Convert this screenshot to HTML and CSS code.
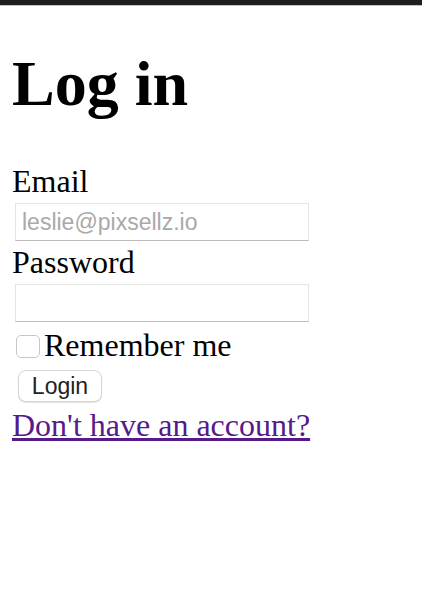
FILE: index.html
```html
<!DOCTYPE html>
<html>
<head>
<meta charset="utf-8">
<title>Log in</title>
<link rel="stylesheet" href="styles.css">
</head>
<body>
<div class="topbar"></div>
<main class="page">
  <h1 class="title">Log in</h1>
  <form class="login-form">
    <label class="field-label" for="email">Email</label>
    <input class="text-input" id="email" type="email" placeholder="leslie@pixsellz.io">
    <label class="field-label" for="password">Password</label>
    <input class="text-input" id="password" type="password">
    <label class="remember">
      <span class="checkbox"></span>
      <span class="remember-text">Remember me</span>
    </label>
    <button class="login-btn" type="button">Login</button>
  </form>
  <a class="signup-link" href="#">Don't have an account?</a>
</main>
</body>
</html>
```

FILE: styles.css
```css
html, body {
  margin: 0;
  padding: 0;
  background: #ffffff;
}
body {
  font-family: "Liberation Serif", "Times New Roman", serif;
  color: #000;
}
.topbar {
  height: 5px;
  background: #1e1e1e;
  border-bottom: 1px solid #c4c4c4;
}
.page {
  padding: 0 12px;
}
.title {
  margin: 42px 0 46px 0;
  font-size: 64px;
  font-weight: bold;
  line-height: 71px;
}
.login-form {
  display: flex;
  flex-direction: column;
  align-items: flex-start;
}
.field-label {
  display: block;
  font-size: 32px;
  line-height: 33px;
}
.text-input {
  display: block;
  box-sizing: border-box;
  width: 294px;
  height: 38px;
  margin: 5px 0 5px 3px;
  padding: 0 6px;
  border: 1px solid #e4e4e4;
  border-bottom-color: #bcbcbc;
  border-radius: 0;
  background: #fff;
  font-family: "Liberation Sans", Arial, sans-serif;
  font-size: 23px;
  outline: none;
}
.text-input::placeholder {
  color: #a9a9a9;
}
.remember {
  display: flex;
  align-items: center;
  margin-top: 2px;
  height: 33px;
}
.checkbox {
  box-sizing: border-box;
  width: 24px;
  height: 23px;
  margin: 2px 4px 0 4px;
  border: 1px solid #c6c6c6;
  border-radius: 5px;
  background: #fff;
}
.remember-text {
  font-size: 32px;
  line-height: 33px;
}
.login-btn {
  box-sizing: border-box;
  margin: 8px 0 0 6px;
  width: 84px;
  height: 32px;
  padding: 0;
  border: 1px solid #d6d6d6;
  border-radius: 8px;
  background: #fff;
  box-shadow: 0 1px 1px rgba(0, 0, 0, 0.12);
  font-family: "Liberation Sans", Arial, sans-serif;
  font-size: 23px;
  color: #222;
}
.signup-link {
  display: block;
  margin-top: 7px;
  font-size: 32px;
  line-height: 33px;
  color: #551a8b;
  text-decoration: underline;
  width: max-content;
}
```
